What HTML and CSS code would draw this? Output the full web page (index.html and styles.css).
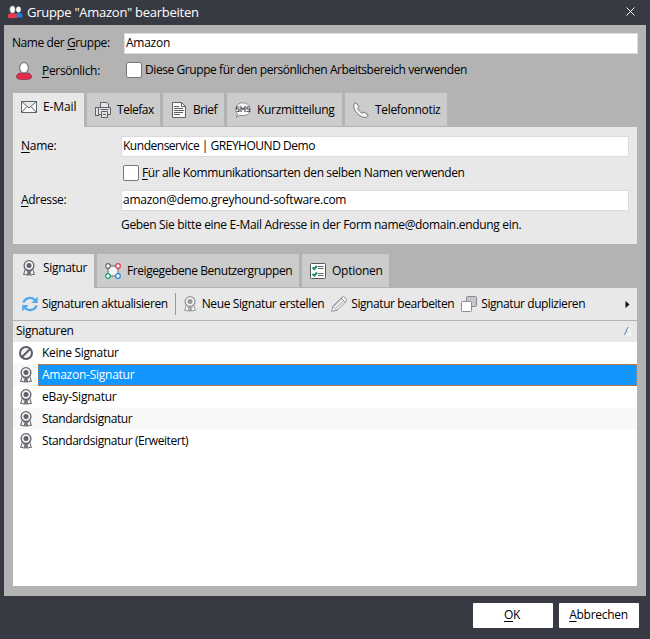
FILE: index.html
```html
<!DOCTYPE html>
<html lang="de">
<head>
<meta charset="utf-8">
<title>Gruppe "Amazon" bearbeiten</title>
<link rel="stylesheet" href="styles.css">
</head>
<body>
<svg class="defs" aria-hidden="true">
  <symbol id="seal" viewBox="0 0 16 16">
    <path d="M4.300 9 2.600 14.500l2.400-.2L6 15.500l1.300-4M11.700 9l1.700 5.500-2.400-.2-1 1.200-1.300-4M7.300 12v3h1.400v-3" fill="#f4f4f4" stroke="currentColor"/>
    <circle cx="8" cy="5.600" r="4.900" fill="#f4f4f4" stroke="currentColor" stroke-width="1.300"/>
    <circle cx="8" cy="5.600" r="2.500" fill="currentColor"/>
    <path d="M5 10.500 8 12l3-1.500" fill="none" stroke="currentColor"/>
  </symbol>
</svg>
<div class="window">
  <header class="titlebar">
    <svg class="people" viewBox="0 0 16 14">
      <path d="M8 12c0-3 1.500-4 4-4s3.500 1 3.500 3c0 1-1 1.500-3.500 1.500z" fill="#1684e0"/>
      <ellipse cx="11.500" cy="4.500" rx="2.300" ry="3" fill="#fff"/>
      <path d="M.5 11.500c0-2.500 2-3.500 5-3.500s5 1 5 3.500c0 1.300-2 1.800-5 1.800s-5-.5-5-1.800z" fill="#e63950"/>
      <ellipse cx="5.500" cy="4.500" rx="2.900" ry="3.800" fill="#fff" stroke="#383a43" stroke-width=".5"/>
    </svg>
    <h1 class="t-title">Gruppe "Amazon" bearbeiten</h1>
    <svg class="close" viewBox="0 0 9 9"><path d="m.5.5 8 8m0-8-8 8" stroke="#fff"/></svg>
  </header>
  <main class="client">
    <div class="row name-row">
      <label class="snug">Name der <u>G</u>ruppe:</label>
      <div class="input">Amazon</div>
    </div>
    <div class="row personal-row">
      <svg class="person" viewBox="0 0 16 18">
        <path d="M.5 15c0-3 2.500-4 4.500-4h6c2 0 4.500 1 4.500 4 0 2-3 2.500-7.500 2.500S.5 17 .5 15z" fill="#e32d48" stroke="#96405a"/>
        <ellipse cx="8" cy="5.800" rx="4.300" ry="5.200" fill="#fff" stroke="#60626c"/>
      </svg>
      <label class="even"><u>P</u>ersönlich:</label>
      <span class="check"></span>
      <span class="snug">Diese Gruppe für den persönlichen Arbeitsbereich verwenden</span>
    </div>

    <nav class="tabs">
      <div class="tab active w-mail">
        <svg class="icon" viewBox="0 0 16 16"><path d="M.5 2.500h15v11H.5zM.5 2.500 8 9l7.500-6.500M.5 13.500 6 7.500m9.500 6-5.500-6" fill="#fafafa" stroke="#60626a"/></svg>
        <span class="loose">E-Mail</span>
      </div>
      <div class="tab w-fax">
        <svg class="icon" viewBox="0 0 16 16"><g fill="#e4e4e4" stroke="#60626a"><rect x=".5" y="5.500" width="3" height="8"/><path d="M5.500 5.500V.5H12l1.500 1.500v3.500"/><path d="M3.500 5.500h12v7h-12z"/><path d="M6.500 9.500h6v6h-6zM8 12.500h3M5.500 7.500h8"/></g></svg>
        <span class="tight">Telefax</span>
      </div>
      <div class="tab w-brief">
        <svg class="icon" viewBox="0 0 16 16"><path d="M1.500.5h9l4 4v11h-13z" fill="#fafafa" stroke="#60626a"/><path d="M10.500.5v4h4M3 4.500h5M3 6.500h9M3 8.500h10M3 10.500h9M3 12.500h6" fill="none" stroke="#60626a"/></svg>
        <span class="tight">Brief</span>
      </div>
      <div class="tab w-sms">
        <svg class="icon" viewBox="0 0 16 16"><path d="M1.500 15.200 2.500 12C-.8 8.500.5.8 8 .8s9.500 9 4.500 11.700c-2 1.300-5 1.300-7.500.7z" fill="#fafafa" stroke="#85878d"/><path d="M4.500 5h-3v2h2.500v2.500H1.500M6 10V5l2 2.500L10 5v5m4.500-5H12v2h2.500v2.500h-3" fill="none" stroke="#50525a" stroke-width="1.200"/></svg>
        <span class="even">Kurzmitteilung</span>
      </div>
      <div class="tab w-tel">
        <svg class="icon" viewBox="0 0 16 16"><path d="M1 2 3 .7 6 4.500 4.800 6.200c.5 2 2.500 4.200 4.700 5L11 10l4.300 3c-.6 1.500-2 2.600-3.600 2.500C6.500 15 1 9.200.7 4.200Z" fill="#f4f4f4" stroke="#74767d"/></svg>
        <span class="even">Telefonnotiz</span>
      </div>
    </nav>
    <section class="mail-panel">
      <label><u>N</u>ame:</label>
      <div class="input tight">Kundenservice | GREYHOUND Demo</div>
      <div class="same-name"><span class="check"></span><span class="close-set"><u>F</u>ür alle Kommunikationsarten den selben Namen verwenden</span></div>
      <label class="even"><u>A</u>dresse:</label>
      <div class="input">amazon@demo.greyhound-software.com</div>
      <p class="hint even">Geben Sie bitte eine E-Mail Adresse in der Form name@domain.endung ein.</p>
    </section>

    <nav class="tabs second">
      <div class="tab active w-sig">
        <svg class="icon"><use href="#seal"/></svg>
        <span class="even">Signatur</span>
      </div>
      <div class="tab w-groups">
        <svg class="icon" viewBox="0 0 16 16"><rect x="3" y="3" width="10" height="10" fill="#f4f4f4" stroke="#60626a"/><g fill="#fff" stroke-width="1.200"><circle cx="3" cy="3" r="2.300" stroke="#60626a"/><circle cx="13" cy="3" r="2.300" stroke="#e0304c"/><circle cx="3" cy="13" r="2.300" stroke="#13a06f"/><circle cx="13" cy="13" r="2.300" stroke="#2489df"/></g></svg>
        <span class="snug">Freigegebene Benutzergruppen</span>
      </div>
      <div class="tab w-opt">
        <svg class="icon" viewBox="0 0 16 16"><rect x=".5" y=".5" width="15" height="15" rx="1" fill="#fff" stroke="#555760"/><path d="M8 3.500h5.500M8 5.500h5.500M8 10.500h5.500M8 12.500h5.500" stroke="#60626a"/><path d="m2.500 4.500 1.800 1.500L7 3M2.500 11l1.800 1.500L7 9.500" fill="none" stroke="#128f61" stroke-width="2"/></svg>
        <span>Optionen</span>
      </div>
    </nav>
    <section class="sig-panel">
      <div class="toolbar">
        <svg class="icon" viewBox="0 0 16 16"><path d="M1.500 6.500C3 1.500 9.500.5 13 4M14.500 9.500c-1.500 5-8 6-11.500 2.500" fill="none" stroke="#50a8f0" stroke-width="2.400"/><path d="M15.700.5V7H9.500zM.3 15.500V9h6.200z" fill="#50a8f0"/></svg>
        <span class="snug">Signaturen aktualisieren</span>
        <i class="separator"></i>
        <svg class="icon light"><use href="#seal"/></svg>
        <span class="close-set">Neue Signatur erstellen</span>
        <svg class="icon" viewBox="0 0 16 16"><path d="m.7 15.300 1-5L11 1q1.500-1 3.500 1t.8 3.200L6 14.300ZM1.700 10.300l4.300 4M10 2l4.500 4.500M3.500 9.500 11 2.800M5 12l8-7.500" fill="#f6f6f6" stroke="#8a8c91" stroke-width=".9"/></svg>
        <span class="snug">Signatur bearbeiten</span>
        <svg class="icon" viewBox="0 0 16 16"><rect x="5.500" y=".5" width="10" height="10" rx="1" fill="#c6c6ca" stroke="#898b91"/><rect x=".5" y="5.500" width="10" height="10" rx="1" fill="#fff" stroke="#898b91"/></svg>
        <span class="snug">Signatur duplizieren</span>
        <svg class="more" viewBox="0 0 5 7"><path d="M.5 0 4.500 3.500.5 7z" fill="#111"/></svg>
      </div>
      <div class="list-head"><span class="even">Signaturen</span><svg class="sort" viewBox="0 0 8 8"><path d="M4 .5 7 7.500H1" fill="none" stroke="#fff"/><path d="M.5 8 4 0" stroke="#4c7fcc"/></svg></div>
      <ul class="list">
        <li><svg class="icon" viewBox="0 0 16 16"><circle cx="8" cy="8" r="6" fill="#f4f4f4" stroke="#5b5d65" stroke-width="2"/><path d="m4 12 8-8" stroke="#5b5d65" stroke-width="2"/></svg><span class="even">Keine Signatur</span></li>
        <li class="selected"><svg class="icon"><use href="#seal"/></svg><span>Amazon-Signatur</span></li>
        <li><svg class="icon"><use href="#seal"/></svg><span>eBay-Signatur</span></li>
        <li><svg class="icon"><use href="#seal"/></svg><span class="snug">Standardsignatur</span></li>
        <li><svg class="icon"><use href="#seal"/></svg><span class="snug">Standardsignatur (Erweitert)</span></li>
      </ul>
    </section>
  </main>
  <footer class="actions">
    <button class="ok"><u>O</u>K</button>
    <button class="cancel"><u>A</u>bbrechen</button>
  </footer>
</div>
</body>
</html>
```

FILE: styles.css
```css
* { box-sizing: border-box; }
body { margin: 0; font: 12px/16px "Open Sans", "Noto Sans", sans-serif; letter-spacing: -0.25px; color: #000; }
h1, p, ul { margin: 0; padding: 0; font: inherit; }
svg { display: block; flex: none; }
span, label, h1, p { white-space: nowrap; }
u { text-underline-offset: 2px; text-decoration-thickness: 1px; text-decoration-skip-ink: none; }
.loose { letter-spacing: -0.1px; }
.even { letter-spacing: -0.32px; }
.close-set { letter-spacing: -0.38px; }
.snug { letter-spacing: -0.42px; }
.tight { letter-spacing: -0.48px; }
.defs { position: absolute; width: 0; height: 0; }
.window { width: 650px; height: 639px; background: #383a43; overflow: hidden; display: flex; flex-direction: column; }
.titlebar { height: 25px; flex: none; display: flex; align-items: center; padding: 0 15px 2px 7px; color: #fff; }
.people { width: 16px; height: 14px; margin-right: 4px; }
.titlebar h1 { font-size: 13px; letter-spacing: -0.27px; }
.close { width: 9px; height: 9px; margin-left: auto; }
.client { height: 571px; flex: none; margin: 0 4px; padding: 8px 9px 10px; background: #b3b3b3; }
.row { display: flex; align-items: center; }
.name-row { height: 21px; margin-right: -1px; }
.name-row label { width: 112px; margin-left: -1px; padding-bottom: 1px; }
.input { height: 21px; flex: 1; background: #fff; border: 1px solid #dcdcdc; padding: 0 1px; white-space: nowrap; line-height: 18px; }
.personal-row { height: 32px; }
.person { width: 16px; height: 18px; margin: 1px 10px 0 3px; }
.personal-row label { width: 84px; padding-top: 1px; }
.check { width: 16px; height: 16px; background: #fff; border: 1px solid #777; border-radius: 2px; margin-right: 3px; flex: none; }
.tabs { height: 34px; margin-top: 7px; display: flex; gap: 3px; }
.tab { height: 33px; background: #ccc; display: flex; align-items: center; padding-left: 8px; gap: 6px; }
.tab.active { height: 34px; background: #e8e8e8; padding-bottom: 6px; }
.icon { width: 16px; height: 16px; color: #60626a; }
.light { color: #96989c; }
.w-mail { width: 71px; }
.w-fax { width: 73px; }
.w-brief { width: 61px; }
.w-sms { width: 115px; }
.w-tel { width: 102px; }
.w-sig { width: 81px; }
.w-groups { width: 202px; }
.w-opt { width: 87px; }
.mail-panel { height: 117px; background: #e8e8e8; padding: 9px 8px 0; display: grid; grid-template-columns: 100px 1fr; grid-template-rows: 21px 33px 21px 28px; align-items: center; }
.mail-panel label { padding-bottom: 2px; }
.same-name { grid-column: 2; display: flex; align-items: center; padding: 0 0 1px 2px; }
.hint { grid-column: 2; }
.second { margin-top: 10px; }
.sig-panel { height: 298px; background: #fff; }
.toolbar { height: 33px; background: #e8e8e8; border-bottom: 1px solid #b3b3b3; display: flex; align-items: center; padding: 0 7px 0 9px; }
.toolbar .icon { margin-right: 4px; }
.toolbar span { margin-right: 7px; }
.separator { width: 1px; height: 22px; background: #999; margin-right: 6px; }
.more { width: 5px; height: 7px; margin-left: auto; }
.list-head { height: 21px; background: #e8e8e8; display: flex; align-items: center; justify-content: space-between; padding: 0 5px 1px 3px; }
.sort { width: 8px; height: 8px; }
.list { list-style: none; }
.list li { height: 22px; display: flex; align-items: center; padding-left: 5px; }
.list li:nth-child(even) { background: #f8f8f8; }
.list span { flex: 1; margin-left: 4px; padding-left: 4px; line-height: 22px; }
.list .selected span { background: #1296ff; color: #fff; outline: 1px dotted #c08050; outline-offset: -1px; }
.actions { display: flex; justify-content: flex-end; gap: 6px; padding: 7px 11px 0 0; }
button { width: 80px; height: 25px; border: 0; border-radius: 1px; background: #fff; color: #000; padding: 0 1px 1px 0; font: inherit; letter-spacing: -0.3px; }
.ok { padding-right: 2px; }
```
